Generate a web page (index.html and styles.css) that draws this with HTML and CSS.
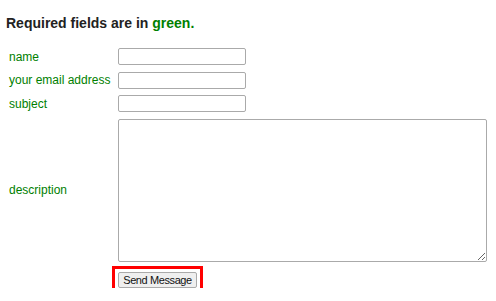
FILE: index.html
```html
<!DOCTYPE html>
<html>
<head>
<meta charset="utf-8">
<link rel="stylesheet" href="styles.css">
</head>
<body>
<div class="page">
  <h3 class="title">Required fields are in <span class="req">green.</span></h3>
  <form class="form">
    <label class="lbl" for="f-name">name</label>
    <input class="field" id="f-name" type="text">
    <label class="lbl" for="f-email">your email address</label>
    <input class="field" id="f-email" type="text">
    <label class="lbl" for="f-subject">subject</label>
    <input class="field" id="f-subject" type="text">
    <label class="lbl" for="f-desc">description</label>
    <textarea class="area" id="f-desc"></textarea>
    <span></span>
    <div class="actions"><span class="highlight"><button class="send" type="button">Send Message</button></span></div>
  </form>
</div>
</body>
</html>
```

FILE: styles.css
```css
html, body {
  margin: 0;
  padding: 0;
  background: #fff;
}
.page {
  padding: 15px 6px 0 6px;
  font-family: "Liberation Sans", Arial, sans-serif;
}
.title {
  margin: 0;
  font-size: 14px;
  line-height: 16px;
  font-weight: bold;
  color: #222;
}
.req {
  color: #008000;
}
.form {
  margin-top: 17px;
  display: grid;
  grid-template-columns: 109px 369px;
  row-gap: 6.5px;
  padding-left: 3px;
  align-items: center;
}
.lbl {
  font-size: 12px;
  line-height: 14px;
  color: #008000;
}
.field {
  box-sizing: border-box;
  width: 128px;
  height: 17px;
  margin: 0;
  padding: 1px 2px;
  border: 1px solid #aaa;
  border-radius: 2px;
  font-size: 11px;
  background: #fff;
}
.area {
  box-sizing: border-box;
  width: 369px;
  height: 143px;
  margin: 0;
  padding: 2px;
  border: 1px solid #aaa;
  border-radius: 2px;
  font-size: 11px;
  resize: both;
}
.actions {
  display: flex;
  padding-top: 3.5px;
}
.highlight {
  display: flex;
  margin: -6px 0 -6px -6px;
  padding: 3px;
  border: 3px solid #f00;
}
.send {
  box-sizing: border-box;
  height: 16px;
  width: 79px;
  margin: 0;
  padding: 0;
  font-family: "Liberation Sans", Arial, sans-serif;
  font-size: 11px;
  letter-spacing: -0.4px;
  line-height: 14px;
  color: #111;
  background: #efefef;
  border: 1px solid #aaa;
  border-radius: 2px;
}
```
